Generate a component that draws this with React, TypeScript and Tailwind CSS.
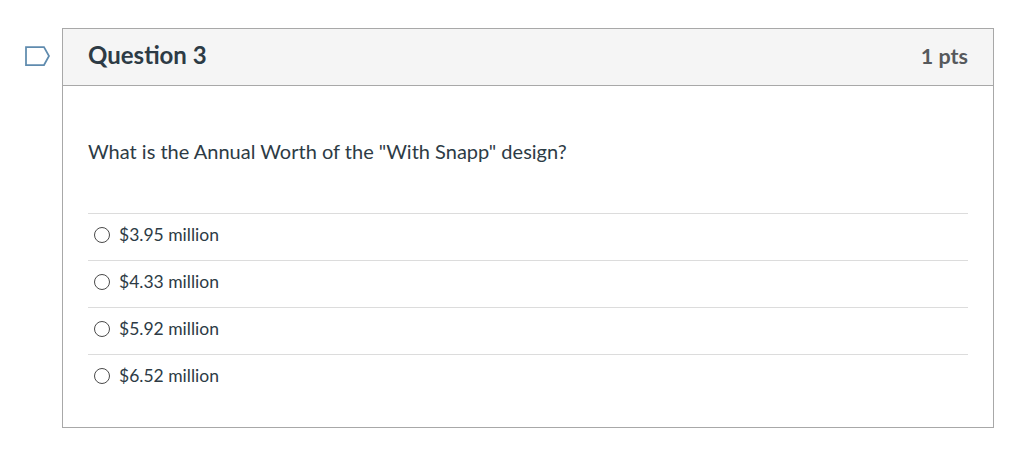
const answers = ["$3.95 million", "$4.33 million", "$5.92 million", "$6.52 million"];

function FlagIcon() {
  return (
    <svg width="27" height="22" viewBox="0 0 27 22" fill="none" className="shrink-0">
      <path d="M2 2H20L25 11L20 20H2Z" fill="#ffffff" stroke="#5f8bae" strokeWidth="1.75" />
    </svg>
  );
}

export default function App() {
  return (
    <div className="flex h-[452px] w-[1015px] items-start bg-white pt-[28px] pr-[21px] font-['Lato','Noto_Sans',sans-serif] text-[#2d3b45]">
      <div className="flex w-[62px] shrink-0 justify-start pt-[17px] pl-[24px]">
        <FlagIcon />
      </div>
      <div className="flex h-[400px] w-[932px] flex-col border border-[#a8a8a8]">
        {/* header */}
        <div className="flex h-[57px] shrink-0 items-center justify-between border-b border-[#a8a8a8] bg-[#f5f5f5] px-[25px]">
          <h2 className="mb-[4px] text-[24px] leading-[32px] font-bold">Question 3</h2>
          <div className="mb-[2px] text-[21.5px] leading-[32px] font-bold text-[#56595c]">1 pts</div>
        </div>
        {/* body */}
        <div className="px-[25px] pt-[52px]">
          <p className="text-[20px] leading-[26px]">What is the Annual Worth of the "With Snapp" design?</p>
          <ul className="mt-[49px]">
            {answers.map((answer) => (
              <li key={answer} className="flex h-[47px] items-start border-t border-[#dcdcdc] pt-[8px] pl-[6px]">
                <span className="mt-[5px] h-[16px] w-[16px] rounded-full border border-[#4a4a4a] bg-white" />
                <span className="ml-[9px] text-[17.5px] leading-[26px]">{answer}</span>
              </li>
            ))}
          </ul>
        </div>
      </div>
    </div>
  );
}
